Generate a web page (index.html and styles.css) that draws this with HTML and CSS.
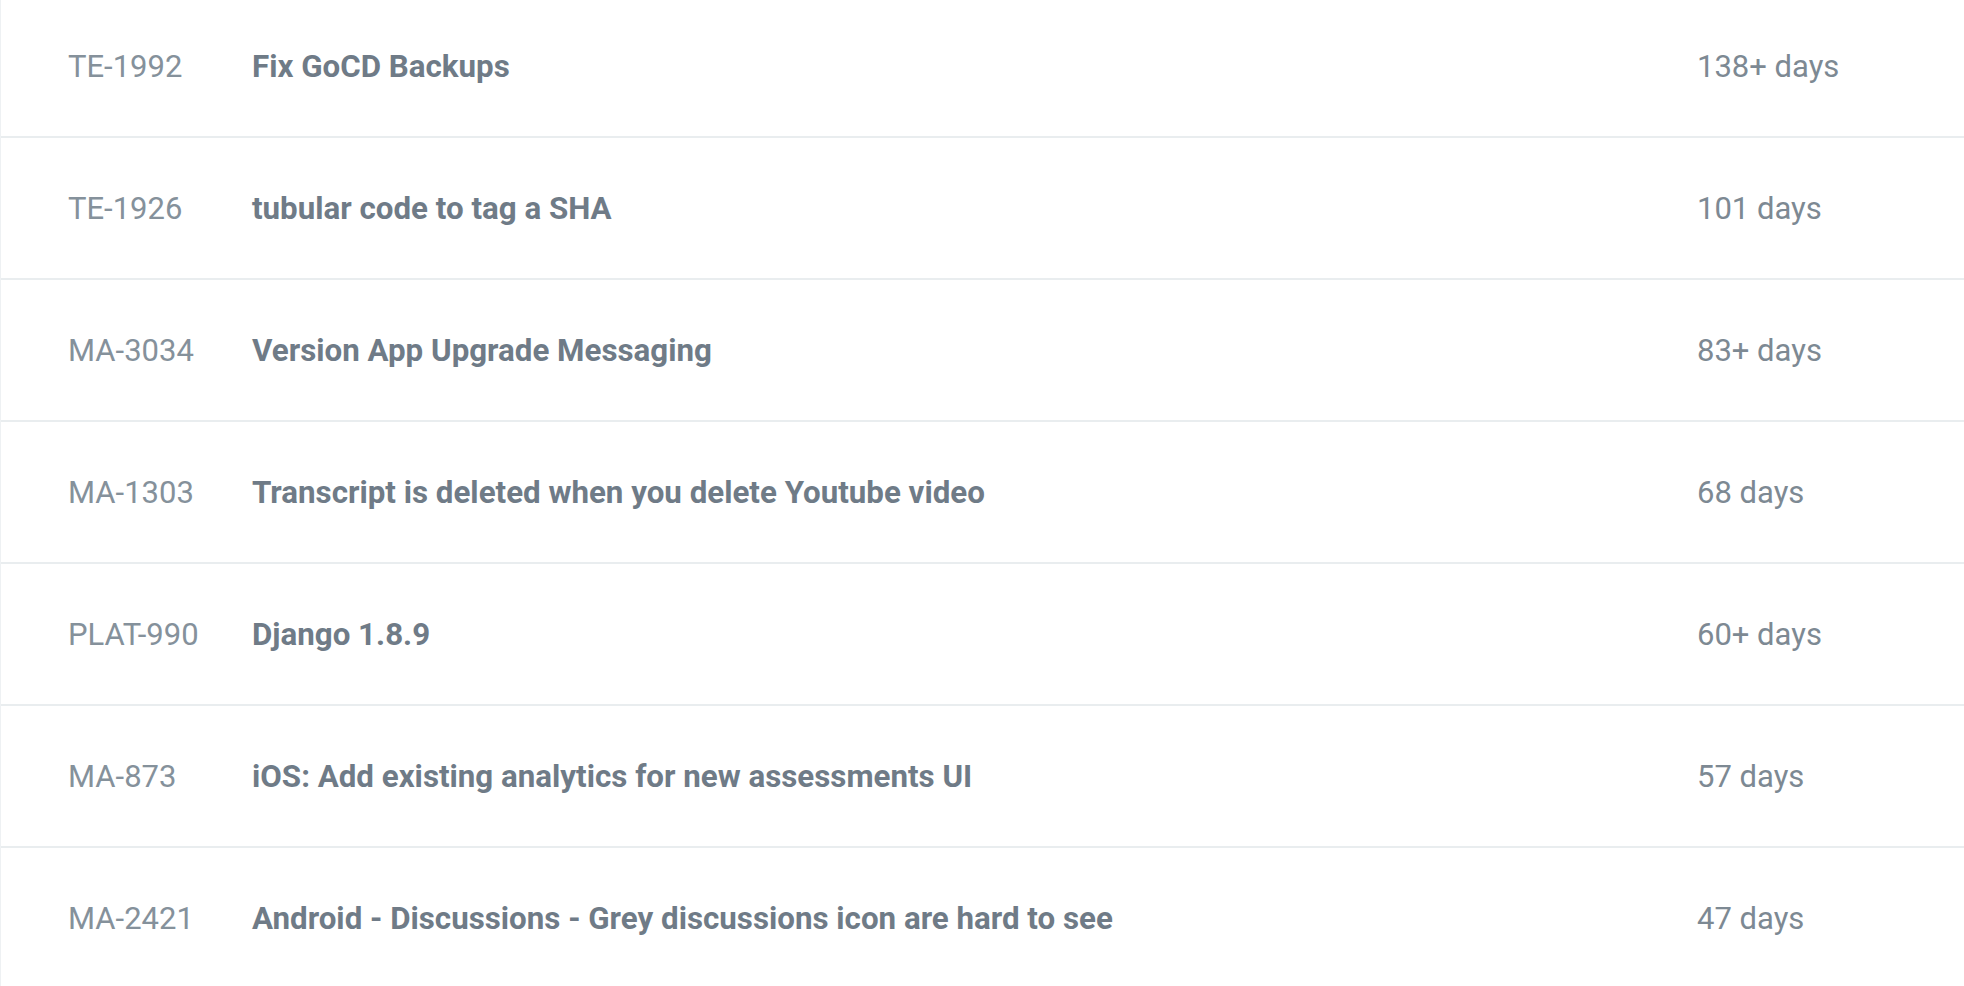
FILE: index.html
```html
<!DOCTYPE html>
<html lang="en">
<head>
<meta charset="utf-8">
<title>Tickets</title>
<link rel="stylesheet" href="styles.css">
</head>
<body>
<div class="list">
  <div class="row"><span class="key">TE-1992</span><span class="title">Fix GoCD Backups</span><span class="age">138+ days</span></div>
  <div class="row"><span class="key">TE-1926</span><span class="title">tubular code to tag a SHA</span><span class="age">101 days</span></div>
  <div class="row"><span class="key">MA-3034</span><span class="title">Version App Upgrade Messaging</span><span class="age">83+ days</span></div>
  <div class="row"><span class="key">MA-1303</span><span class="title">Transcript is deleted when you delete Youtube video</span><span class="age">68 days</span></div>
  <div class="row"><span class="key">PLAT-990</span><span class="title">Django 1.8.9</span><span class="age">60+ days</span></div>
  <div class="row"><span class="key">MA-873</span><span class="title">iOS: Add existing analytics for new assessments UI</span><span class="age">57 days</span></div>
  <div class="row"><span class="key">MA-2421</span><span class="title">Android - Discussions - Grey discussions icon are hard to see</span><span class="age">47 days</span></div>
</div>
</body>
</html>
```

FILE: styles.css
```css
html, body {
  margin: 0;
  padding: 0;
  background: #ffffff;
  overflow: hidden;
}
body {
  font-family: Roboto, "Liberation Sans", sans-serif;
}
.list {
  margin-top: -4px;
  border-left: 1px solid #eef1f3;
}
.row {
  display: grid;
  grid-template-columns: 184px 1fr 267px;
  align-items: center;
  height: 140px;
  padding-left: 67px;
  border-bottom: 2px solid #e9edef;
  font-size: 31px;
}
.row:last-child {
  border-bottom: none;
}
.key {
  color: #85919b;
  font-weight: 400;
}
.title {
  color: #6f7b87;
  font-weight: 700;
  font-size: 31.3px;
}
.age {
  color: #7d8993;
  font-weight: 400;
}
```
